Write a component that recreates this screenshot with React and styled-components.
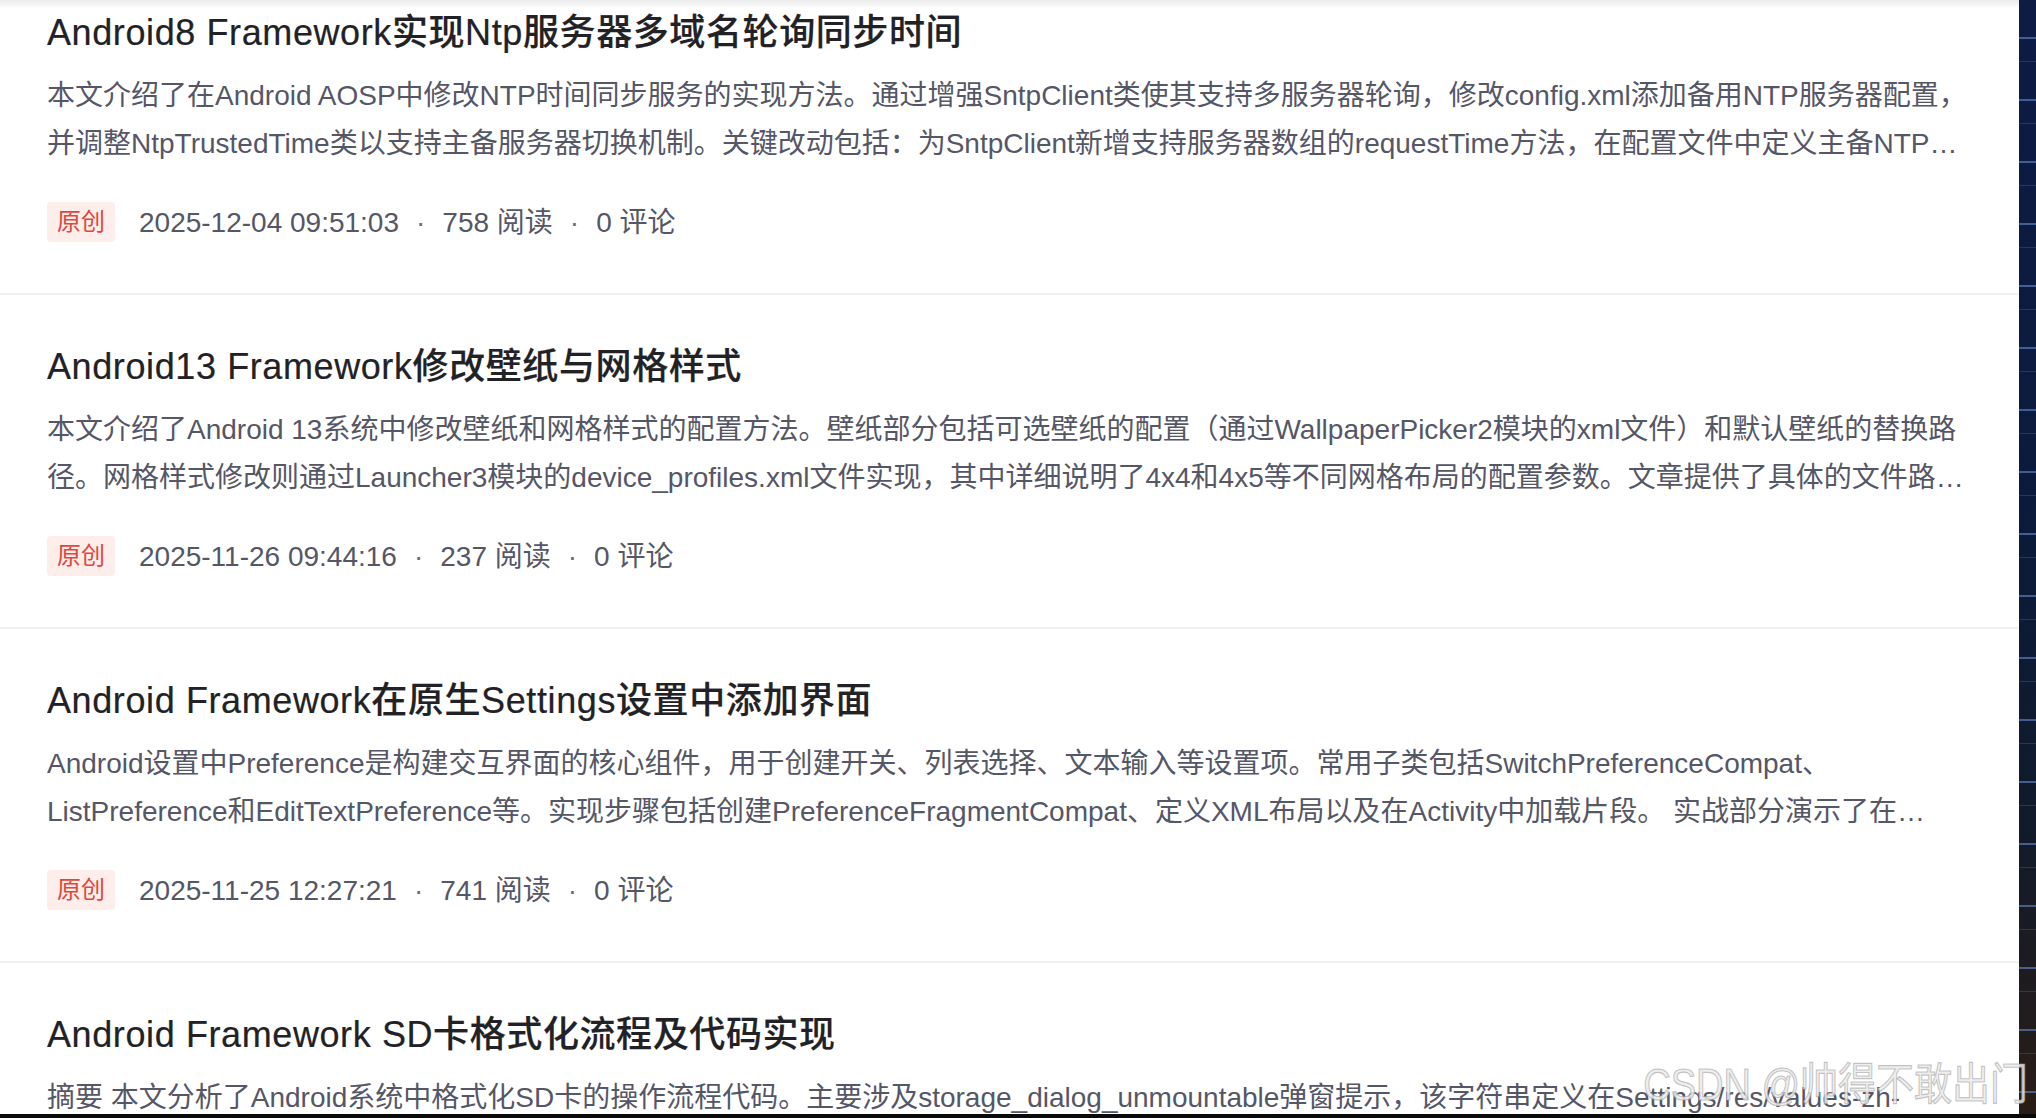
import React from 'react'
import styled, { createGlobalStyle } from 'styled-components'

const GlobalStyle = createGlobalStyle`
  html, body {
    margin: 0;
    padding: 0;
    overflow: hidden;
  }
  body {
    font-family: "Liberation Sans", "Noto Sans CJK SC", sans-serif;
    background: #0a0a0a;
  }
`

const Screen = styled.div`
  position: relative;
  height: 100vh;
  display: flex;
  flex-direction: column;
`

const Main = styled.div`
  flex: 1;
  min-height: 0;
  display: flex;
`

const Card = styled.div`
  flex: 1;
  position: relative;
  background: #fff;
  overflow: hidden;
`

const TopShade = styled.div`
  position: absolute;
  top: 0;
  left: 0;
  right: 0;
  height: 8px;
  z-index: 1;
  background: linear-gradient(#ececee, #f6f6f7 5px, rgba(255, 255, 255, 0) 8px);
`

const Wallpaper = styled.div`
  width: 17px;
  background:
    repeating-linear-gradient(
      to bottom,
      transparent 0 37px,
      rgba(110, 150, 220, 0.55) 37px 39px,
      transparent 39px 61px,
      rgba(70, 110, 190, 0.35) 61px 62px
    ),
    linear-gradient(to bottom, #0e1b44 0%, #0b1a3c 45%, #121a2a 75%, #2a1d17 100%);
`

const BottomBar = styled.div`
  height: 4px;
  background: #0a0a0a;
`

const List = styled.div`
  margin-top: -39px;
`

const Item = styled.article`
  padding: 48px 44px 51px 47px;
  border-bottom: 2px solid #f0f0f5;
`

const Title = styled.h3`
  margin: 0;
  font-size: 36px;
  line-height: 48px;
  font-weight: 500;
  letter-spacing: 0.6px;
  color: #222226;
  -webkit-text-stroke: 0.2px #222226;
  white-space: nowrap;
  overflow: hidden;
  text-overflow: ellipsis;
`

const Desc = styled.p`
  margin: 15px 0 0;
  font-size: 28px;
  line-height: 48px;
  color: #555666;
  display: -webkit-box;
  -webkit-line-clamp: 2;
  -webkit-box-orient: vertical;
  overflow: hidden;
`

const Meta = styled.div`
  margin-top: 34px;
  height: 40px;
  display: flex;
  align-items: center;
`

const Tag = styled.span`
  display: inline-flex;
  align-items: center;
  height: 40px;
  padding: 0 10px;
  margin-right: 24px;
  border-radius: 4px;
  background: #fdeeec;
  color: #e0463a;
  font-size: 24px;
  line-height: 38px;
`

const MetaText = styled.span`
  padding-top: 2px;
  font-size: 28px;
  line-height: 40px;
  color: #555666;
  white-space: nowrap;
`

const Dot = styled.span`
  margin: 0 17px;
  color: #6b6c7a;
`

const Watermark = styled.div`
  position: absolute;
  right: 8px;
  bottom: 11px;
  font-size: 38px;
  line-height: 1;
  color: rgba(236, 236, 236, 0.85);
  -webkit-text-stroke: 1px rgba(150, 150, 150, 0.55);
  white-space: nowrap;
  transform: scaleY(1.18);
  transform-origin: bottom right;
  pointer-events: none;
`

const posts = [
  {
    title: 'Android8 Framework实现Ntp服务器多域名轮询同步时间',
    desc: '本文介绍了在Android AOSP中修改NTP时间同步服务的实现方法。通过增强SntpClient类使其支持多服务器轮询，修改config.xml添加备用NTP服务器配置，并调整NtpTrustedTime类以支持主备服务器切换机制。关键改动包括：为SntpClient新增支持服务器数组的requestTime方法，在配置文件中定义主备NTP服务器地址，以及在NtpTrustedTime中实现轮询逻辑。',
    date: '2025-12-04 09:51:03',
    reads: 758,
    comments: 0
  },
  {
    title: 'Android13 Framework修改壁纸与网格样式',
    desc: '本文介绍了Android 13系统中修改壁纸和网格样式的配置方法。壁纸部分包括可选壁纸的配置（通过WallpaperPicker2模块的xml文件）和默认壁纸的替换路径。网格样式修改则通过Launcher3模块的device_profiles.xml文件实现，其中详细说明了4x4和4x5等不同网格布局的配置参数。文章提供了具体的文件路径和修改示例。',
    date: '2025-11-26 09:44:16',
    reads: 237,
    comments: 0
  },
  {
    title: 'Android Framework在原生Settings设置中添加界面',
    desc: 'Android设置中Preference是构建交互界面的核心组件，用于创建开关、列表选择、文本输入等设置项。常用子类包括SwitchPreferenceCompat、ListPreference和EditTextPreference等。实现步骤包括创建PreferenceFragmentCompat、定义XML布局以及在Activity中加载片段。 实战部分演示了在Settings中添加新界面的完整流程。',
    date: '2025-11-25 12:27:21',
    reads: 741,
    comments: 0
  },
  {
    title: 'Android Framework SD卡格式化流程及代码实现',
    desc: '摘要 本文分析了Android系统中格式化SD卡的操作流程代码。主要涉及storage_dialog_unmountable弹窗提示，该字符串定义在Settings/res/values-zh-rCN/\u2060strings.xml中，并介绍了格式化的具体实现。',
    date: '2025-11-20 10:15:42',
    reads: 512,
    comments: 0
  }
]

const Post = ({ post }) => (
  <Item>
    <Title>{post.title}</Title>
    <Desc>{post.desc}</Desc>
    <Meta>
      <Tag>原创</Tag>
      <MetaText>
        {post.date}
        <Dot>·</Dot>
        {post.reads} 阅读
        <Dot>·</Dot>
        {post.comments} 评论
      </MetaText>
    </Meta>
  </Item>
)

const App = () => (
  <>
    <GlobalStyle />
    <Screen>
      <Main>
        <Card>
          <TopShade />
          <List>
            {posts.map(post => <Post key={post.title} post={post} />)}
          </List>
        </Card>
        <Wallpaper />
      </Main>
      <BottomBar />
      <Watermark>CSDN @帅得不敢出门</Watermark>
    </Screen>
  </>
)

export default App
